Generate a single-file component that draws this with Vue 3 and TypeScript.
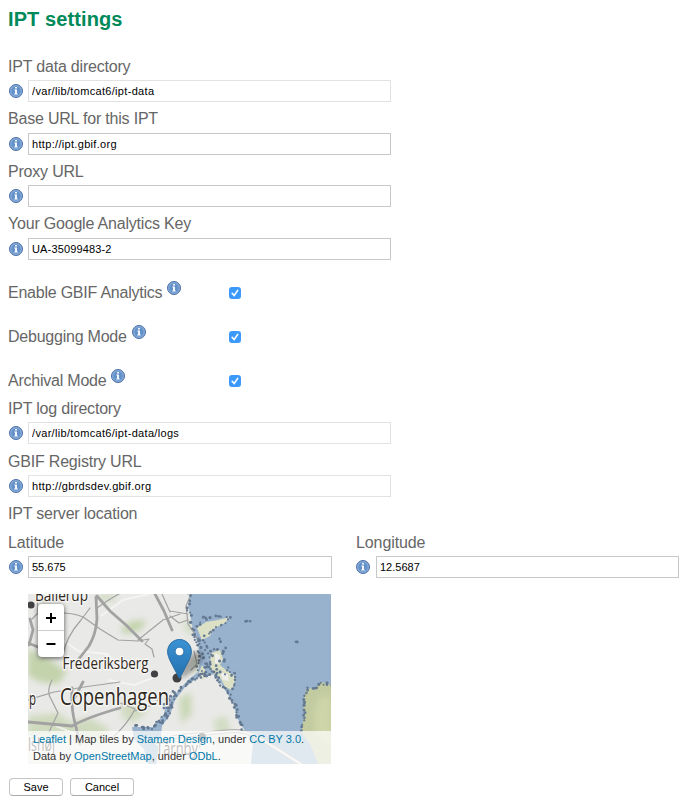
<script setup lang="ts">
import { defineComponent, h, reactive } from 'vue'

interface Field {
  key: string
  label: string
  value: string
  readonly?: boolean
}

type Point = [number, number]

const InfoIcon = defineComponent({
  render: () =>
    h('svg', { class: 'info', width: 14, height: 14, viewBox: '0 0 14 14' }, [
      h('circle', { cx: 7, cy: 7, r: 6.5, fill: '#7fa3d0', stroke: '#4a70aa', 'stroke-width': 1 }),
      h('circle', { cx: 7, cy: 7, r: 5.1, fill: '#6391c9', stroke: '#8db0da', 'stroke-width': 0.8 }),
      h('path', { d: 'M6.100 3h1.800v1.500H6.100zM5.400 5.600H7.900v4h.8v1H5.300v-1h.8V6.600h-.7z', fill: '#fff' }),
    ]),
})

const mainFields = reactive<Field[]>([
  { key: 'data', label: 'IPT data directory', value: '/var/lib/tomcat6/ipt-data', readonly: true },
  { key: 'base', label: 'Base URL for this IPT', value: 'http://ipt.gbif.org' },
  { key: 'proxy', label: 'Proxy URL', value: '' },
  { key: 'ga', label: 'Your Google Analytics Key', value: 'UA-35099483-2' },
])

const toggles = reactive([
  { label: 'Enable GBIF Analytics', on: true },
  { label: 'Debugging Mode', on: true },
  { label: 'Archival Mode', on: true },
])

const systemFields = reactive<Field[]>([
  { key: 'log', label: 'IPT log directory', value: '/var/lib/tomcat6/ipt-data/logs', readonly: true },
  { key: 'registry', label: 'GBIF Registry URL', value: 'http://gbrdsdev.gbif.org', readonly: true },
])

const location = reactive<Field[]>([
  { key: 'lat', label: 'Latitude', value: '55.675' },
  { key: 'lng', label: 'Longitude', value: '12.5687' },
])

// Shorelines, drawn as a scatter of small stones along each line.
const shores: { pts: Point[]; spread: number; gap: number }[] = [
  { pts: [[162, 0], [160, 10], [162, 20], [164, 30], [166, 42], [171, 50], [172, 62], [169, 76], [172, 84]], spread: 2, gap: 3.4 },
  { pts: [[170, 33], [174, 24], [180, 26], [190, 22], [202, 24], [195, 31], [185, 36], [177, 42], [172, 48]], spread: 1.5, gap: 3.6 },
  { pts: [[166, 44], [176, 50], [182, 57], [196, 56], [193, 65], [198, 72], [202, 79], [208, 83]], spread: 2.5, gap: 2.8 },
  { pts: [[174, 56], [178, 68], [174, 80], [182, 82], [190, 74], [197, 84]], spread: 3, gap: 2.8 },
  { pts: [[184, 60], [180, 72], [188, 82], [194, 92], [202, 101], [207, 112], [210, 125], [215, 137]], spread: 1.5, gap: 2.4 },
  { pts: [[182, 80], [168, 83], [156, 91], [148, 102], [142, 113], [141, 122], [133, 130]], spread: 1.8, gap: 2.1 },
  { pts: [[146, 97], [138, 109], [137, 120], [128, 131], [119, 136], [108, 132], [103, 131]], spread: 2, gap: 2.3 },
  { pts: [[208, 83], [207, 90], [202, 96]], spread: 1, gap: 3 },
  { pts: [[192, 45], [193, 50]], spread: 0.5, gap: 2.5 },
  { pts: [[303, 91], [293, 89], [287, 94], [278, 95], [275, 107], [276, 121], [273, 138]], spread: 1.6, gap: 2.8 },
  { pts: [[218, 27], [224, 27]], spread: 0.5, gap: 2 },
  { pts: [[268, 48], [271, 48]], spread: 0.3, gap: 2 },
]

let seed = 17
function rand(): number {
  seed = (seed * 16807) % 2147483647
  return seed / 2147483647
}

const stones = shores.flatMap(({ pts, spread, gap }) =>
  pts.slice(1).flatMap((b, i) => {
    const a = pts[i]
    const n = Math.max(1, Math.round(Math.hypot(b[0] - a[0], b[1] - a[1]) / gap))
    return Array.from({ length: n }, (_, k) => ({
      x: a[0] + ((b[0] - a[0]) * k) / n + (rand() - 0.5) * 2 * spread,
      y: a[1] + ((b[1] - a[1]) * k) / n + (rand() - 0.5) * 2 * spread,
      r: 1 + rand() * 0.6,
    }))
  }),
)
</script>

<template>
  <main class="page">
    <h1>IPT settings</h1>
    <form @submit.prevent>
      <div v-for="f in mainFields" :key="f.key" class="field main">
        <label :for="f.key">{{ f.label }}</label>
        <div class="control">
          <InfoIcon />
          <input :id="f.key" v-model="f.value" type="text" :readonly="f.readonly" :class="{ key: f.key === 'ga' }" />
        </div>
      </div>

      <div v-for="t in toggles" :key="t.label" class="toggle">
        <span class="caption">{{ t.label }} <InfoIcon /></span>
        <button type="button" class="check" :class="{ off: !t.on }" :aria-label="t.label" @click="t.on = !t.on">
          <svg v-if="t.on" width="12" height="12" viewBox="0 0 12 12">
            <path d="M3.200 6.400 5.200 8.500 8.700 3.400" fill="none" stroke="#fff" stroke-width="1.600" stroke-linecap="round" />
          </svg>
        </button>
      </div>

      <div v-for="f in systemFields" :key="f.key" class="field">
        <label :for="f.key">{{ f.label }}</label>
        <div class="control">
          <InfoIcon />
          <input :id="f.key" v-model="f.value" type="text" :readonly="f.readonly" />
        </div>
      </div>

      <h2>IPT server location</h2>
      <div class="coords">
        <div v-for="f in location" :key="f.key" class="field">
          <label :for="f.key">{{ f.label }}</label>
          <div class="control">
            <InfoIcon />
            <input :id="f.key" v-model="f.value" type="text" />
          </div>
        </div>
      </div>

      <div class="map">
        <svg class="tiles" width="303" height="170" viewBox="0 0 303 170">
          <defs>
            <filter id="soft" x="-30%" y="-30%" width="160%" height="160%"><feGaussianBlur stdDeviation="3" /></filter>
            <filter id="shade" x="-50%" y="-50%" width="200%" height="200%"><feGaussianBlur stdDeviation="2" /></filter>
            <linearGradient id="pin" x1="0" y1="0" x2="0" y2="1">
              <stop offset="0" stop-color="#3a93d5" />
              <stop offset="1" stop-color="#236fab" />
            </linearGradient>
            <clipPath id="ground">
              <path d="M0 0H162L160 10 162 20 165 36 170 50 172 66 170 78 160 86 150 97 138 109 136 120 125 133 104 133 106 145 116 155 120 170H0z" />
              <path d="M182 81 188 80 197 96 205 108 209 124 217 137 225 148 223 170H128L132 150 134 132 142 121 147 106 157 93 169 84z" />
            </clipPath>
          </defs>
          <rect width="303" height="170" fill="#98b1cc" />
          <g fill="#e9e9e7">
            <path d="M0 0H162L160 10 162 20 165 36 170 50 172 66 170 78 160 86 150 97 138 109 136 120 125 133 104 133 106 145 116 155 120 170H0z" />
            <path d="M182 81 188 80 197 96 205 108 209 124 217 137 225 148 223 170H128L132 150 134 132 142 121 147 106 157 93 169 84z" />
          </g>
          <g clip-path="url(#ground)">
            <g fill="#c3d3ab" filter="url(#soft)">
              <path d="M0 54 12 62 24 67 39 78 30 90 12 88 0 82z" />
              <path d="M92 35 104 27 119 26 113 36 98 40z" />
              <path d="M0 122 30 119 42 128 62 124 82 135 70 150 30 140 0 146z" opacity=".7" />
              <path d="M93 108 108 108 119 118 105 129 94 124z" opacity=".65" />
              <path d="M151 104 163 99 164 120 153 130z" opacity=".8" />
              <path d="M186 125 199 122 203 140 190 151z" opacity=".6" />
              <path d="M157 24 166 29 165 43 155 35zM163 67 174 64 173 82 164 78zM70 0 89 0 88 7 72 8z" opacity=".55" />
              <path d="M12 5 22 10 29 22 23 28 10 18z" opacity=".4" />
            </g>
            <g fill="none" stroke="#f8f8f7" stroke-width="2" opacity=".7">
              <path d="M35 46 50 57 79 60 95 78M80 86 106 91 130 82M28 132 67 148M73 22 95 6 121 0" />
            </g>
          </g>
          <g fill="#dce0c4">
            <path d="M169 34 178 28 190 26 202 23 197 29 185 35 182 42 174 46z" />
            <path d="M183 59 192 56 195 65 192 71 198 76 208 83 204 96 197 93 193 85 184 78 182 70z" />
            <path d="M174 71 179 79 175 86 170 81z" />
          </g>
          <path d="M187 59 192 61 191 70 187 69zM192 78 200 80 201 87 195 86z" fill="#eeeeea" />
          <path d="M303 91 293 88 287 94 278 95 275 107 276 121 273 138 282 150 290 170H303z" fill="#c2cba0" />
          <path d="M303 103 292 103 286 119 287 140 303 156z" fill="#ced6a9" filter="url(#soft)" />
          <g fill="none" stroke="#a2a2a2" stroke-linecap="round" stroke-linejoin="round">
            <g stroke-width="2.800">
              <path d="M68 3 69 25Q68 40 61 52L50 66M69 2 82 17 98 31 114 47M127 0 136 17 144 36" />
              <path d="M0 128 44 132Q60 123 92 114M44 94Q43 115 47 129L52 150M55 88 46 105M0 49 15 55M2 25 5 36 1 51" />
            </g>
            <g stroke-width="1.200">
              <path d="M36 19 Q52 20 58 25L72 35 90 46 110 47 121 45 117 50 124 55 126 63" />
              <path d="M35 61Q38 43 53 26L62 14M69 14Q88 0 104 -6M142 17 160 20M142 22 151 29 160 26M134 0 142 18M110 46 135 26 152 20" />
              <path d="M9 0 10 19 4 25M0 106 26 98Q60 92 92 88M24 86Q18 98 23 105L30 119 21 138M92 109 107 115Q100 130 82 146" />
              <path d="M163 0 158 12 160 30 172 48M166 57 169 70 163 76M107 117 127 110 132 102M170 143 172 154" />
            </g>
          </g>
          <path d="M144 143 203 137Q218 136 233 145L276 172" fill="none" stroke="#b5b5b3" stroke-width="4" />
          <path d="M144 143 203 137Q218 136 233 145L276 172" fill="none" stroke="#f5f5f2" stroke-width="1.500" />
          <g fill="#637891">
            <circle v-for="(s, i) in stones" :key="i" :cx="s.x" :cy="s.y" :r="s.r" />
          </g>
          <g fill="#414143">
            <circle cx="3" cy="11" r="3.600" />
            <circle cx="126.500" cy="80" r="3.600" />
            <circle cx="149" cy="84" r="4.500" />
            <circle cx="174" cy="143" r="4" />
          </g>
          <g class="places">
            <text x="7" y="7" font-size="17" textLength="53" lengthAdjust="spacingAndGlyphs">Ballerup</text>
            <text x="34.500" y="75" font-size="17" textLength="86" lengthAdjust="spacingAndGlyphs">Frederiksberg</text>
            <text x="32" y="111" font-size="24" textLength="109" lengthAdjust="spacingAndGlyphs">Copenhagen</text>
            <text x="1" y="111" font-size="18" textLength="7" lengthAdjust="spacingAndGlyphs">p</text>
            <text x="0" y="157" font-size="19" textLength="27" lengthAdjust="spacingAndGlyphs">lshøj</text>
            <text x="128" y="161" font-size="19" textLength="42" lengthAdjust="spacingAndGlyphs">Tårnby</text>
          </g>
          <path d="M152 84C151 70 161 59 172 57 180 61 171 74 157 83z" fill="#000" opacity=".28" filter="url(#shade)" />
          <path d="M151.500 45.500c-6.600 0-11.900 5.500-11.900 12.100 0 3.100 1.500 6.800 2.500 9.100l9.400 18 9.300-18c1-2.300 2.600-5.800 2.600-9.100 0-6.600-5.300-12.100-11.900-12.100z" fill="url(#pin)" stroke="#2b6da4" />
          <circle cx="151.500" cy="57.500" r="4.300" fill="#fff" stroke="#2467a0" stroke-width=".8" />
        </svg>
        <div class="zoom">
          <button type="button" aria-label="Zoom in"><svg width="12" height="12"><path d="M1 6h10M6 1v10" /></svg></button>
          <button type="button" aria-label="Zoom out"><svg width="12" height="12"><path d="M1.500 6h9" /></svg></button>
        </div>
        <p class="credit">
          <span><a>Leaflet</a> | Map tiles by <a>Stamen Design</a>, under <a>CC BY 3.0</a>.</span><br />
          <span>Data by <a>OpenStreetMap</a>, under <a>ODbL</a>.</span>
        </p>
      </div>

      <div class="actions">
        <button type="submit" class="save">Save</button>
        <button type="button" class="cancel">Cancel</button>
      </div>
    </form>
  </main>
</template>

<style>
body {
  background: #fff;
}
</style>

<style scoped>
.page {
  box-sizing: border-box;
  width: 692px;
  height: 805px;
  padding: 7px 8px 0;
  overflow: hidden;
  font-family: "Liberation Sans", Arial, sans-serif;
  color: #666;
}
h1 {
  margin: 0 0 25px;
  height: 24px;
  font-size: 20px;
  line-height: 24px;
  letter-spacing: 0.1px;
  color: #008959;
}
.field {
  height: 52.5px;
}
.field label {
  display: block;
  height: 24px;
  font-size: 16px;
  line-height: 22px;
  letter-spacing: -0.2px;
}
.field.main label {
  height: 24.2px;
  margin-top: -0.2px;
}
.field.main {
  display: flow-root;
}
.control {
  display: flex;
  align-items: center;
  gap: 5px;
  padding-left: 1px;
}
:deep(.info) {
  display: block;
  flex: none;
}
input {
  box-sizing: border-box;
  width: 363px;
  height: 22px;
  margin: 0;
  padding: 0 3px;
  border: 1px solid #c8c8c8;
  background: #fff;
  font: 11px "Liberation Sans", Arial, sans-serif;
  letter-spacing: 0.32px;
  color: #000;
  outline: 0;
}
input[readonly] {
  border-color: #e2e2e2;
}
input.key {
  letter-spacing: 0.15px;
}
.toggle {
  display: grid;
  grid-template-columns: 221px 12px;
  align-items: start;
  height: 28px;
  padding-top: 16px;
}
.caption {
  display: flex;
  gap: 5px;
  font-size: 16px;
  line-height: 22px;
  letter-spacing: -0.23px;
}
.caption :deep(.info) {
  margin-top: -1px;
}
.check {
  width: 12px;
  height: 12px;
  margin-top: 5px;
  padding: 0;
  border: 0;
  border-radius: 3px;
  background: #3b99fc;
}
.check.off {
  background: #ddd;
}
.check svg {
  display: block;
}
h2 {
  margin: 0;
  height: 29px;
  font-size: 16px;
  font-weight: 400;
  line-height: 22px;
  letter-spacing: -0.2px;
}
.coords {
  display: grid;
  grid-template-columns: 347px 324px;
  height: 62px;
}
.coords label {
  letter-spacing: -0.1px;
}
.coords input {
  width: 304px;
  letter-spacing: 0;
}
.coords .field:last-child label {
  padding-left: 1px;
}
.coords .field:last-child input {
  width: 303px;
}
.coords .field:last-child .control {
  gap: 6px;
}
.map {
  position: relative;
  width: 303px;
  height: 170px;
  margin-left: 20px;
  overflow: hidden;
}
.tiles {
  display: block;
}
.places {
  font-family: "Open Sans", "Noto Sans", sans-serif;
  fill: #2f2820;
  stroke: #f6f6f4;
  stroke-width: 3px;
  stroke-linejoin: round;
  paint-order: stroke;
}
.zoom {
  position: absolute;
  left: 10px;
  top: 10px;
  width: 26px;
  border-radius: 4px;
  background: #fff;
  box-shadow: 0 1px 5px rgba(0, 0, 0, 0.65);
}
.zoom button {
  display: grid;
  place-items: center;
  width: 26px;
  height: 26px;
  padding: 2px 0 0;
  border: 0;
  background: none;
}
.zoom button:first-child {
  height: 27px;
  border-bottom: 1px solid #ccc;
}
.zoom button:last-child {
  padding-top: 0;
}
.zoom path {
  fill: none;
  stroke: #000;
  stroke-width: 2;
}
.credit {
  position: absolute;
  left: 0;
  right: 0;
  bottom: 0;
  box-sizing: border-box;
  height: 33px;
  margin: 0;
  padding-left: 5px;
  background: rgba(255, 255, 255, 0.7);
  font-size: 11px;
  line-height: 17px;
  white-space: nowrap;
  color: #333;
}
.credit a {
  color: #0078a8;
}
.actions {
  display: flex;
  gap: 7px;
  padding: 14px 0 0 1px;
}
.actions button {
  box-sizing: border-box;
  height: 18px;
  padding: 0;
  border: 1px solid #c4c4c4;
  border-bottom-color: #aaa;
  border-radius: 4px;
  background: #fff;
  font: 11px/15px "Liberation Sans", Arial, sans-serif;
  color: #000;
}
.save {
  width: 54px;
}
.cancel {
  width: 64px;
}
</style>
